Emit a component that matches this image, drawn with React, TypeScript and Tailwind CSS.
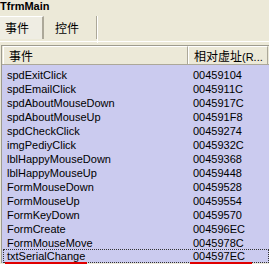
import React from "react"

const rows: [string, string][] = [
  ["spdExitClick", "00459104"],
  ["spdEmailClick", "0045911C"],
  ["spdAboutMouseDown", "0045917C"],
  ["spdAboutMouseUp", "004591F8"],
  ["spdCheckClick", "00459274"],
  ["imgPediyClick", "0045932C"],
  ["lblHappyMouseDown", "00459368"],
  ["lblHappyMouseUp", "00459448"],
  ["FormMouseDown", "00459528"],
  ["FormMouseUp", "00459554"],
  ["FormKeyDown", "00459570"],
  ["FormCreate", "004596EC"],
  ["FormMouseMove", "0045978C"],
  ["txtSerialChange", "004597EC"],
]

const App = () => {
  return (
    <div className="w-[269px] h-[264px] overflow-hidden bg-[#ece9d8] text-black text-[11px] font-['Liberation_Sans','Noto_Sans_CJK_SC',sans-serif]">
      {/* title */}
      <div className="h-[16px] pt-[1px] leading-[11px] font-bold">TfrmMain</div>

      {/* tabs */}
      <div className="flex h-[23px] text-[12px] font-['Noto_Sans_CJK_SC',sans-serif]">
        <div className="w-[44px] flex items-center pl-[5px] border-t border-white border-r-2 border-r-[#aca899] bg-[#efede3]">
          事件
        </div>
        <div className="w-[53px] flex items-center pl-[11px] border-r border-r-[#aca899]">控件</div>
        <div className="w-px h-[27px] bg-white" />
      </div>
      <div className="h-[3px] border-b border-white" />

      {/* list */}
      <div className="mt-[3px] ml-[1px] border-l border-t border-[#9d9b8f] bg-[#cbcbef]">
        <div className="flex h-[19px] bg-[#ece9d8] border-b border-[#aca899] text-[12px] font-['Noto_Sans_CJK_SC',sans-serif] leading-[18px]">
          <div className="w-[185px] pl-[5px] border-l border-t border-white border-r border-r-[#aca899] ml-px">事件</div>
          <div className="w-[80px] pl-[5px] border-l border-t border-white border-r border-r-[#aca899] whitespace-nowrap overflow-hidden">
            相对虚址<span className="font-['Liberation_Sans',sans-serif] text-[11px]">(R...</span>
          </div>
        </div>
        <div className="flex flex-col pl-px pt-[2px]">
          {rows.map(([name, addr], i) => {
            const last = i === rows.length - 1
            return (
              <div
                key={name}
                className={
                  last
                    ? "flex h-[14px] leading-[12px] border border-dotted border-[#333]"
                    : "flex h-[14px] leading-[14px] border border-transparent"
                }
              >
                <div className="w-[185px] pl-[3px]">
                  {last ? (
                    <span className="inline-block -ml-[2px] pl-[2px] pr-[2px] border-b-2 border-[#e00000]">{name}</span>
                  ) : (
                    name
                  )}
                </div>
                <div className="pl-[4px]">
                  {last ? (
                    <span className="inline-block -ml-[3px] pl-[3px] pr-[7px] border-b-2 border-[#e00000]">{addr}</span>
                  ) : (
                    addr
                  )}
                </div>
              </div>
            )
          })}
        </div>
      </div>
    </div>
  )
}

export default App
